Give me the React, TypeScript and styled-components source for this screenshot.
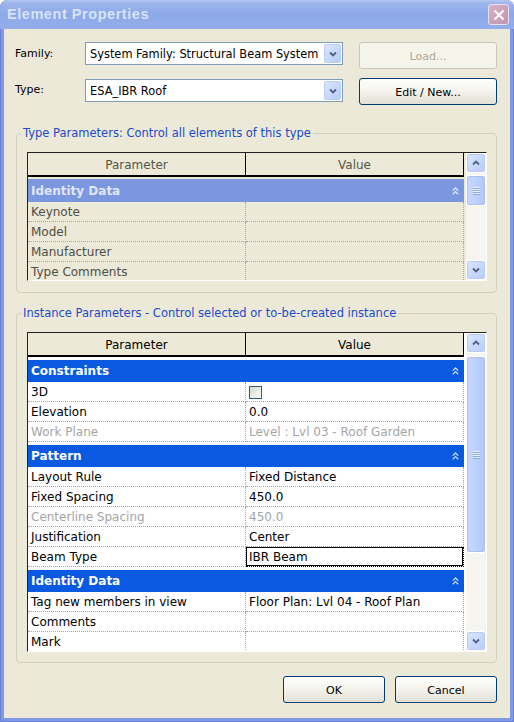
import React from "react";
import styled, { createGlobalStyle } from "styled-components";

type Row =
  | { kind: "group"; label: string }
  | {
      kind: "data";
      param: string;
      value?: string;
      check?: boolean;
      disabled?: boolean;
      focused?: boolean;
    };

const typeRows: Row[] = [
  { kind: "group", label: "Identity Data" },
  { kind: "data", param: "Keynote" },
  { kind: "data", param: "Model" },
  { kind: "data", param: "Manufacturer" },
  { kind: "data", param: "Type Comments" },
];

const instanceRows: Row[] = [
  { kind: "group", label: "Constraints" },
  { kind: "data", param: "3D", check: true },
  { kind: "data", param: "Elevation", value: "0.0" },
  {
    kind: "data",
    param: "Work Plane",
    value: "Level : Lvl 03 - Roof Garden",
    disabled: true,
  },
  { kind: "group", label: "Pattern" },
  { kind: "data", param: "Layout Rule", value: "Fixed Distance" },
  { kind: "data", param: "Fixed Spacing", value: "450.0" },
  {
    kind: "data",
    param: "Centerline Spacing",
    value: "450.0",
    disabled: true,
  },
  { kind: "data", param: "Justification", value: "Center" },
  { kind: "data", param: "Beam Type", value: "IBR Beam", focused: true },
  { kind: "group", label: "Identity Data" },
  {
    kind: "data",
    param: "Tag new members in view",
    value: "Floor Plan: Lvl 04 - Roof Plan",
  },
  { kind: "data", param: "Comments" },
  { kind: "data", param: "Mark" },
];

const GlobalStyle = createGlobalStyle`
  html, body {
    margin: 0;
    padding: 0;
    background: #ffffff;
  }
  body {
    font-family: "DejaVu Sans", Verdana, sans-serif;
  }
`;

const ChevronDown = () => (
  <svg width="8" height="6" viewBox="0 0 8 6">
    <path d="M1 1.5 L4 4.5 L7 1.5" fill="none" stroke="#4d6185" strokeWidth="1.8" />
  </svg>
);

const ChevronUp = () => (
  <svg width="8" height="6" viewBox="0 0 8 6">
    <path d="M1 4.5 L4 1.5 L7 4.5" fill="none" stroke="#4d6185" strokeWidth="1.8" />
  </svg>
);

const Collapse = ({ color }: { color: string }) => (
  <svg width="7" height="8" viewBox="0 0 7 8">
    <path d="M0.8 3.6 L3.5 1 L6.2 3.6" fill="none" stroke={color} strokeWidth="1.3" />
    <path d="M0.8 7.2 L3.5 4.6 L6.2 7.2" fill="none" stroke={color} strokeWidth="1.3" />
  </svg>
);

const PropertyTable: React.FC<{
  rows: Row[];
  height: number;
  dim?: boolean;
  thumbTop: number;
  thumbHeight: number;
}> = ({ rows, height, dim, thumbTop, thumbHeight }) => (
  <TableFrame $dim={dim} style={{ height }}>
    <GridArea>
      <HeaderRow $dim={dim}>
        <HeaderCell>Parameter</HeaderCell>
        <HeaderCell>Value</HeaderCell>
      </HeaderRow>
      {rows.map((row, i) =>
        row.kind === "group" ? (
          <GroupRow key={i} $dim={dim}>
            <GroupBar $dim={dim}>
              <span>{row.label}</span>
              <Collapse color={dim ? "#e4ecfb" : "#c9dbfa"} />
            </GroupBar>
          </GroupRow>
        ) : (
          <DataRow key={i} $dim={dim}>
            <Cell $dim={dim} $disabled={row.disabled}>
              {row.param}
            </Cell>
            <Cell $dim={dim} $disabled={row.disabled} $focused={row.focused}>
              {row.check ? <CheckBox /> : row.value}
            </Cell>
          </DataRow>
        )
      )}
    </GridArea>
    <ScrollBar>
      <ScrollButton>
        <ChevronUp />
      </ScrollButton>
      <ScrollTrack>
        <Thumb style={{ marginTop: thumbTop, height: thumbHeight }}>
          <Grip />
        </Thumb>
      </ScrollTrack>
      <ScrollButton>
        <ChevronDown />
      </ScrollButton>
    </ScrollBar>
  </TableFrame>
);

export default function App() {
  return (
    <>
      <GlobalStyle />
      <Window>
        <TitleBar>
          <TitleText>Element Properties</TitleText>
          <CloseButton>
            <svg width="12" height="12" viewBox="0 0 12 12">
              <path d="M1.5 1.5 L10.5 10.5 M10.5 1.5 L1.5 10.5" stroke="#fff" strokeWidth="2.2" />
            </svg>
          </CloseButton>
        </TitleBar>

        <Body>
          <FormRows>
            <FormRow>
              <Label>Family:</Label>
              <Combo>
                <ComboText>System Family: Structural Beam System</ComboText>
                <ComboArrow>
                  <ChevronDown />
                </ComboArrow>
              </Combo>
              <DialogButton $width={138} disabled>
                Load...
              </DialogButton>
            </FormRow>
            <FormRow>
              <Label>Type:</Label>
              <Combo $offset={1}>
                <ComboText>ESA_IBR Roof</ComboText>
                <ComboArrow>
                  <ChevronDown />
                </ComboArrow>
              </Combo>
              <DialogButton $width={138}>Edit / New...</DialogButton>
            </FormRow>
          </FormRows>

          <GroupBox $top={21}>
            <Legend>Type Parameters: Control all elements of this type</Legend>
            <PropertyTable rows={typeRows} height={129} dim thumbTop={2} thumbHeight={31} />
          </GroupBox>

          <GroupBox $top={13} $bottom={10}>
            <Legend>Instance Parameters - Control selected or to-be-created instance</Legend>
            <PropertyTable rows={instanceRows} height={320} thumbTop={3} thumbHeight={197} />
          </GroupBox>

          <Footer>
            <DialogButton $width={102}>OK</DialogButton>
            <DialogButton $width={102}>Cancel</DialogButton>
          </Footer>
        </Body>
      </Window>
    </>
  );
}

const Window = styled.div`
  width: 514px;
  height: 722px;
  display: flex;
  flex-direction: column;
  background: #8099e2;
  border-radius: 8px 8px 0 0;
  box-shadow: inset 1px 0 0 #6a82d6, inset -1px 0 0 #6a82d6, inset 0 -1px 0 #6a82d6;
  box-sizing: border-box;
`;

const TitleBar = styled.div`
  height: 29px;
  flex-shrink: 0;
  display: flex;
  align-items: center;
  justify-content: space-between;
  padding: 0 5px 0 7px;
  border-radius: 8px 8px 0 0;
  background: linear-gradient(#b3c8f3 0, #9cb5ec 3px, #8ea9e8 14px, #93aeea 100%);
  box-sizing: border-box;
`;

const TitleText = styled.div`
  font-family: "Liberation Sans", Arial, sans-serif;
  font-weight: bold;
  font-size: 14.5px;
  letter-spacing: 0.55px;
  color: #d8e3f8;
  margin-top: -1px;
`;

const CloseButton = styled.div`
  width: 21px;
  height: 21px;
  display: flex;
  align-items: center;
  justify-content: center;
  border: 1px solid #ecdff0;
  border-radius: 3px;
  background: linear-gradient(135deg, #d6b2ca, #c093b0);
  box-sizing: border-box;
`;

const Body = styled.div`
  flex: 1;
  margin: 0 4px 4px 4px;
  background: #ece9d8;
  padding: 13px 13px 15px 11px;
  display: flex;
  flex-direction: column;
  font-size: 11px;
  color: #000;
`;

const FormRows = styled.div`
  display: flex;
  flex-direction: column;
  gap: 9px;
`;

const FormRow = styled.div`
  display: flex;
  align-items: flex-start;
  height: 27px;
`;

const Label = styled.div`
  width: 70px;
  height: 23px;
  line-height: 23px;
`;

const Combo = styled.div<{ $offset?: number }>`
  width: 258px;
  height: 23px;
  margin-top: ${(p) => p.$offset || 0}px;
  display: flex;
  align-items: center;
  background: #fff;
  border: 1px solid #7f9db9;
  box-sizing: border-box;
`;

const ComboText = styled.div`
  flex: 1;
  padding-left: 4px;
  font-size: 11.4px;
  white-space: nowrap;
  overflow: hidden;
`;

const ComboArrow = styled.div`
  width: 17px;
  height: 19px;
  margin-right: 1px;
  display: flex;
  align-items: center;
  justify-content: center;
  border: 1px solid #bacdf5;
  border-radius: 2px;
  background: linear-gradient(135deg, #dbe6fd, #b8ccf8);
  box-sizing: border-box;
`;

const DialogButton = styled.button<{ $width: number }>`
  width: ${(p) => p.$width}px;
  height: 27px;
  margin-left: auto;
  padding: 1px 0 0;
  font-family: inherit;
  font-size: 11px;
  color: #000;
  border: 1px solid #003c74;
  border-radius: 3px;
  background: linear-gradient(#ffffff, #f3f2ec 50%, #e2e0d6);
  box-sizing: border-box;

  &:disabled {
    color: #aca899;
    border-color: #c9c7ba;
    background: #f5f4ea;
  }
`;

const Footer = styled.div`
  display: flex;
  justify-content: flex-end;
  gap: 10px;
  margin-top: 13px;

  & > button {
    margin-left: 0;
  }
`;

const GroupBox = styled.fieldset<{ $top: number; $bottom?: number }>`
  margin: ${(p) => p.$top}px 0 0 1px;
  padding: 12px 9px ${(p) => p.$bottom ?? 11}px 10px;
  border: 1px solid #d0d0bf;
  border-radius: 4px;
  min-width: 0;
`;

const Legend = styled.legend`
  margin-left: -6px;
  padding: 1px 2px 0;
  line-height: 13px;
  font-size: 11.5px;
  color: #1a4bc9;
`;

const TableFrame = styled.div<{ $dim?: boolean }>`
  width: 460px;
  display: flex;
  background: ${(p) => (p.$dim ? "#ece9d8" : "#ffffff")};
  border-top: 1px solid #222;
  border-left: 1px solid #222;
  border-right: 1px solid #fff;
  border-bottom: 1px solid #fff;
  box-sizing: border-box;
  overflow: hidden;
`;

const GridArea = styled.div`
  width: 436px;
  margin-right: 2px;
  overflow: hidden;
  font-size: 12px;
`;

const HeaderRow = styled.div<{ $dim?: boolean }>`
  display: grid;
  grid-template-columns: 218px 218px;
  height: 24px;
  border-bottom: 2px solid #000;
  background: #ece9d8;
  color: ${(p) => (p.$dim ? "#55554a" : "#000")};
  box-sizing: border-box;
`;

const HeaderCell = styled.div`
  border-right: 1px solid #000;
  text-align: center;
  padding-top: 2px;
  line-height: 20px;
`;

const GroupRow = styled.div<{ $dim?: boolean }>`
  padding-top: ${(p) => (p.$dim ? 2 : 3)}px;
`;

const GroupBar = styled.div<{ $dim?: boolean }>`
  height: ${(p) => (p.$dim ? 23 : 22)}px;
  display: flex;
  align-items: center;
  justify-content: space-between;
  padding: 0 5px 0 3px;
  background: ${(p) => (p.$dim ? "#7b97e0" : "#0a5ae1")};
  color: ${(p) => (p.$dim ? "#dfe7f8" : "#ffffff")};
  font-weight: bold;
`;

const DataRow = styled.div<{ $dim?: boolean }>`
  display: grid;
  grid-template-columns: 218px 218px;
  height: 20px;
  background: ${(p) => (p.$dim ? "#ece9d8" : "#ffffff")};
`;

const Cell = styled.div<{ $dim?: boolean; $disabled?: boolean; $focused?: boolean }>`
  display: flex;
  align-items: center;
  padding-left: 3px;
  white-space: nowrap;
  overflow: hidden;
  border-right: 1px dotted #a6a6a6;
  border-bottom: 1px dotted #a6a6a6;
  color: ${(p) => (p.$disabled ? "#a5a5a5" : p.$dim ? "#4f4f46" : "#000")};
  box-sizing: border-box;
  ${(p) => p.$focused && "box-shadow: inset 0 0 0 1px #000; border-color: #000;"}
`;

const CheckBox = styled.span`
  width: 13px;
  height: 13px;
  margin-top: 2px;
  border: 1px solid #3b5a78;
  background: linear-gradient(135deg, #d8d8d2, #fbfbf8);
  box-sizing: border-box;
`;

const ScrollBar = styled.div`
  width: 20px;
  display: flex;
  flex-direction: column;
  background: #f6f5f0;
`;

const ScrollButton = styled.div`
  height: 20px;
  flex-shrink: 0;
  display: flex;
  align-items: center;
  justify-content: center;
  border: 1px solid #fff;
  border-radius: 3px;
  background: linear-gradient(135deg, #dce7fd, #b6cbf9);
  box-shadow: inset 0 0 0 1px #b8cbf5;
  box-sizing: border-box;
`;

const ScrollTrack = styled.div`
  flex: 1;
  display: flex;
  flex-direction: column;
`;

const Thumb = styled.div`
  display: flex;
  align-items: center;
  justify-content: center;
  border: 1px solid #fff;
  border-radius: 3px;
  background: linear-gradient(90deg, #cad9fc, #bacffa 60%, #b0c6f6);
  box-shadow: inset 0 0 0 1px #aebff0;
  box-sizing: border-box;
`;

const Grip = styled.div`
  width: 7px;
  height: 8px;
  background: repeating-linear-gradient(#eef3fe 0 1px, #8da6e3 1px 2px);
`;
